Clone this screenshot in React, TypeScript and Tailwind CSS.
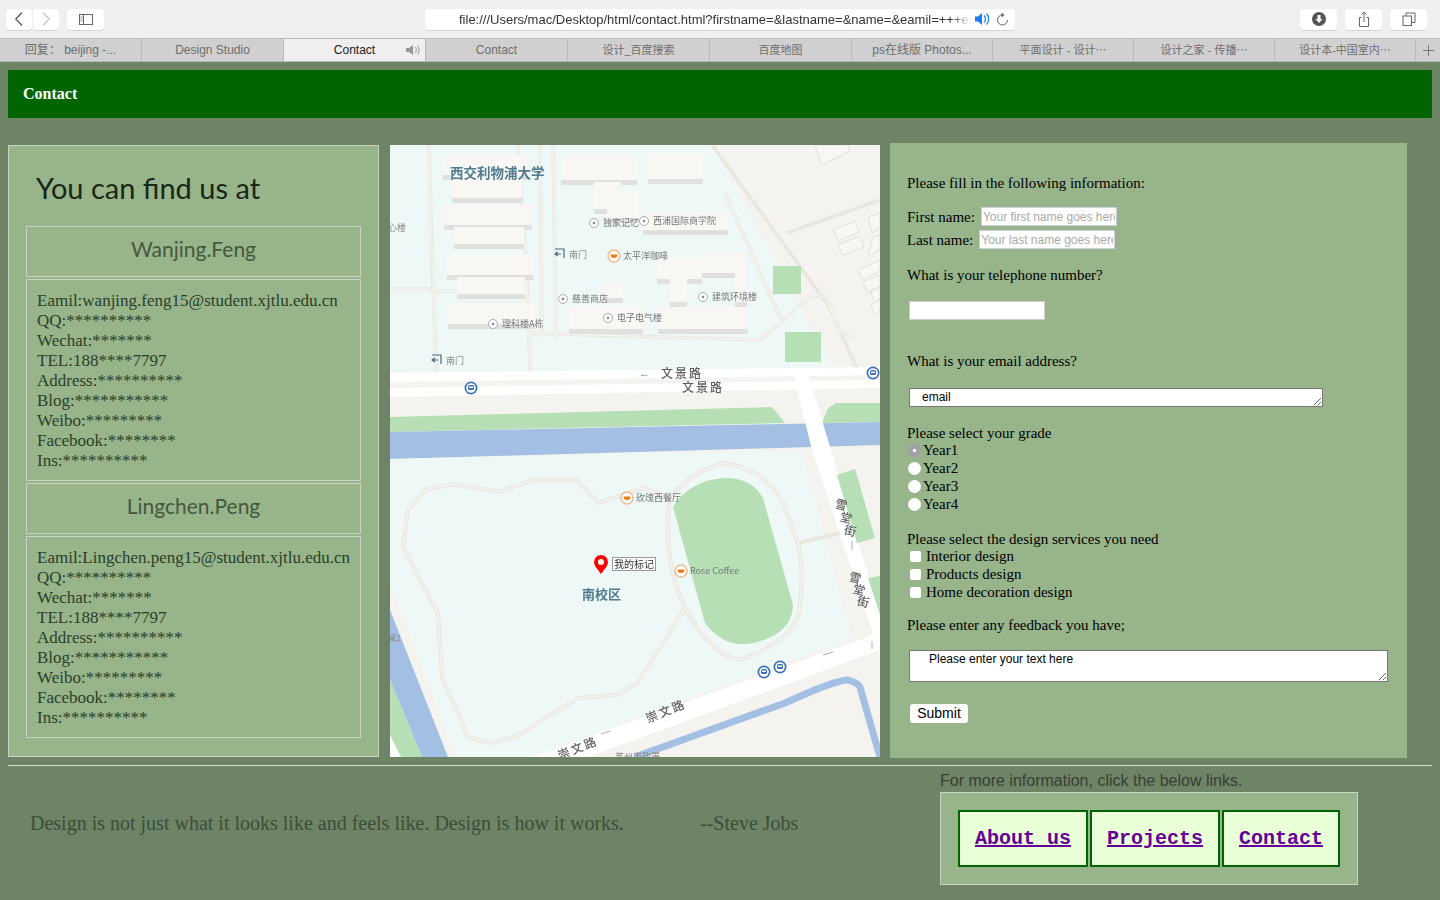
import React from 'react';

const serif = "font-['Liberation_Serif','Noto_Sans_CJK_SC',serif]";
const cjk = 'Noto Sans CJK SC, sans-serif';

const tabs = ['回复： beijing -...', 'Design Studio', 'Contact', 'Contact', '设计_百度搜索', '百度地图', 'ps在线版 Photos...', '平面设计 - 设计⋯', '设计之家 - 传播⋯', '设计本-中国室内⋯'];

const people = [
  { name: 'Wanjing.Feng', email: 'wanjing.feng15@student.xjtlu.edu.cn' },
  { name: 'Lingchen.Peng', email: 'Lingchen.peng15@student.xjtlu.edu.cn' },
];

const details = ['QQ:**********', 'Wechat:*******', 'TEL:188****7797', 'Address:**********', 'Blog:***********', 'Weibo:*********', 'Facebook:********', 'Ins:**********'];

const buildings = [
  [53, 10, 85, 25], [62, 30, 70, 28], [54, 60, 88, 25], [64, 82, 70, 22], [57, 110, 86, 25], [67, 132, 68, 22], [58, 158, 87, 26],
  [171, 10, 76, 30], [258, 8, 55, 31], [204, 37, 27, 32], [217, 46, 32, 32], [253, 67, 85, 23], [267, 112, 45, 27], [312, 108, 45, 25],
  [280, 134, 17, 28], [345, 128, 12, 34], [268, 162, 90, 27], [179, 161, 74, 28], [213, 138, 20, 20],
];

const ChromeButton = ({ className, children }: { className: string; children: React.ReactNode }) => (
  <div className={`h-[21px] rounded-[4px] bg-white shadow-[0_1px_0_#d4d4d4] flex items-center justify-center ${className}`}>{children}</div>
);

const Toolbar = () => (
  <div className="h-[39px] bg-[#efefef] border-b border-[#bdbdbd] flex items-center relative">
    <ChromeButton className="w-[26px] ml-[6px]">
      <svg width="10" height="16" viewBox="0 0 10 16" fill="none" stroke="#555" strokeWidth="1.2"><path d="M8 1.5 1.8 8 8 14.5" /></svg>
    </ChromeButton>
    <ChromeButton className="w-[26px] ml-[1px]">
      <svg width="10" height="16" viewBox="0 0 10 16" fill="none" stroke="#c4c4c4" strokeWidth="1.2"><path d="M2 1.5 8.2 8 2 14.5" /></svg>
    </ChromeButton>
    <ChromeButton className="w-[37px] ml-[8px]">
      <svg width="16" height="13" viewBox="0 0 16 13" fill="none" stroke="#666"><rect x="1.5" y="1.5" width="13" height="10" /><path d="M5.5 1.5v10" /><path d="M2.5 4h2M2.5 6h2M2.5 8h2" strokeWidth=".7" /></svg>
    </ChromeButton>
    <div className="w-[590px] h-[21px] ml-[321px] rounded-[4px] bg-white shadow-[0_1px_0_#d4d4d4] flex items-center font-['Liberation_Sans',sans-serif] text-[13px] text-[#333] relative overflow-hidden">
      <span className="ml-[34px] pt-[1px] w-[512px] shrink-0 whitespace-nowrap overflow-hidden [mask-image:linear-gradient(to_right,black_96%,transparent)]">file:///Users/mac/Desktop/html/contact.html?firstname=&amp;lastname=&amp;name=&amp;eamil=+++email</span>
      <svg className="ml-[3px] shrink-0" width="17" height="14" viewBox="0 0 17 14" fill="#1a7cf0"><path d="M1 4.500h3L8 1v12L4 9.500H1z" /><path d="M10 3.500a5 5 0 0 1 0 7M12.500 1.500a8 8 0 0 1 0 11" fill="none" stroke="#1a7cf0" strokeWidth="1.2" /></svg>
      <svg className="ml-[5px] shrink-0" width="13" height="15" viewBox="0 0 13 15" fill="none" stroke="#666"><path d="M6.500 3a5 5 0 1 0 5 5" /><path d="M5.500.5 8.500 3l-3 2.500" fill="#666" stroke="none" /></svg>
    </div>
    <ChromeButton className="w-[37px] ml-[285px]">
      <svg width="14" height="14" viewBox="0 0 14 14"><circle cx="7" cy="7" r="7" fill="#555" /><path d="M5.500 3h3v4h2L7 11 3.500 7h2z" fill="#fff" /></svg>
    </ChromeButton>
    <ChromeButton className="w-[37px] ml-[8px]">
      <svg width="12" height="17" viewBox="0 0 12 17" fill="none" stroke="#666"><path d="M3.500 6.500h-2v9h9v-9h-2M6 11V1M3.500 3.500 6 1l2.500 2.500" /></svg>
    </ChromeButton>
    <ChromeButton className="w-[37px] ml-[8px]">
      <svg width="14" height="14" viewBox="0 0 14 14" fill="none" stroke="#666"><rect x="1" y="4" width="8.500" height="9.500" /><path d="M4 4V1h9v9.500H9.500" /></svg>
    </ChromeButton>
  </div>
);

const TabBar = () => (
  <div className="h-[23px] bg-[#d0d0d0] border-b border-[#b5b5b5] flex font-['Liberation_Sans','Noto_Sans_CJK_SC',sans-serif] text-[#6e6e6e]">
    {tabs.map((tab, i) => (
      <div
        key={i}
        className={`${i < 6 ? 'w-[142px]' : 'w-[141px]'} ${[4, 5, 7, 8, 9].includes(i) ? 'text-[11px]' : 'text-[12px]'} ${i === 2 ? 'bg-[#efefef] text-[#222] relative' : ''} border-r border-[#b8b8b8] flex items-center justify-center whitespace-nowrap`}
      >
        {tab}
        {i === 2 && (
          <svg className="absolute right-[3px] top-[5px]" width="17" height="12" viewBox="0 0 17 12" fill="#999"><path d="M1 4h3l4-3v10L4 8H1z" /><path d="M10 3a4 4 0 0 1 0 6M12.500 1.500a7 7 0 0 1 0 9" fill="none" stroke="#999" /></svg>
        )}
      </div>
    ))}
    <div className="flex-1 flex items-center justify-center">
      <svg width="11" height="11" viewBox="0 0 11 11" stroke="#777"><path d="M5.500 0v11M0 5.500h11" /></svg>
    </div>
  </div>
);

const PersonCard = ({ name, email }: { name: string; email: string }) => (
  <div className="flex flex-col gap-[2px]">
    <div className="h-[51px] border border-[#c9d3c4] pb-[6px] flex items-center justify-center font-['Lato',sans-serif] text-[21px] text-[#46573f]">{name}</div>
    <div className={`h-[202px] border border-[#c9d3c4] pt-[11px] pl-[10px] text-[17px] leading-[20px] text-[#2b3f29] ${serif}`}>
      <div>Eamil:{email}</div>
      {details.map((line) => <div key={line}>{line}</div>)}
    </div>
  </div>
);

const ContactPanel = () => (
  <div className="w-[371px] h-[612px] mt-[2px] border border-[#c9d3c4] bg-[#97b48b] pl-[17px] pr-[17px] shrink-0">
    <h1 className="h-[80px] pl-[10px] pt-[22px] font-['Lato',sans-serif] text-[29px] leading-[40px] font-normal text-[#1a2718]">You can find us at</h1>
    <div className="flex flex-col gap-[2px]">
      {people.map((p) => <PersonCard key={p.name} {...p} />)}
    </div>
  </div>
);

const Bus = ({ x, y }: { x: number; y: number }) => (
  <g transform={`translate(${x} ${y})`}>
    <circle r="6.500" fill="#3c70b8" />
    <circle r="4.800" fill="#fff" />
    <rect x="-3" y="-3" width="6" height="5" rx="1.500" fill="#3c70b8" />
    <rect x="-2" y="-1.500" width="4" height="1.500" fill="#fff" />
  </g>
);

const Poi = ({ x, y, label, size = 9 }: { x: number; y: number; label: string; size?: number }) => (
  <g>
    <circle cx={x} cy={y} r="4.500" fill="#fff" stroke="#aaa" />
    <circle cx={x} cy={y} r="1.300" fill="#888" />
    <text x={x + 9} y={y + 3} fontSize={size} fill="#777" fontFamily={cjk}>{label}</text>
  </g>
);

const Cafe = ({ x, y, label }: { x: number; y: number; label: string }) => (
  <g>
    <circle cx={x} cy={y} r="6" fill="#fff" stroke="#eebb90" strokeWidth="1.500" />
    <path d={`M${x - 3.500} ${y - 1.500}h7a3.500 3.500 0 0 1-7 0z`} fill="#ee7a10" />
    <text x={x + 9} y={y + 3} fontSize="9" fill="#777" fontFamily={cjk}>{label}</text>
  </g>
);

const Gate = ({ x, y }: { x: number; y: number }) => (
  <g>
    <path d={`M${x} ${y}h9v9M${x} ${y + 5}h6M${x + 3} ${y + 3}l-3 2 3 2`} fill="none" stroke="#4a6480" strokeWidth="1.200" />
    <text x={x + 14} y={y + 9} fontSize="9" fill="#8a8a8a" fontFamily={cjk}>南门</text>
  </g>
);

const Road = ({ x, y, label, rotate = 0, size = 12 }: { x: number; y: number; label: string; rotate?: number; size?: number }) => (
  <text transform={`translate(${x} ${y}) rotate(${rotate})`} fontSize={size} fontWeight="500" fill="#5f5f5f" letterSpacing="2" fontFamily={cjk}>{label}</text>
);

const StreetChar = ({ x, y, ch }: { x: number; y: number; ch: string }) => (
  <text transform={`translate(${x} ${y}) rotate(15)`} fontSize="12" fontWeight="500" textAnchor="middle" fill="#5f5f5f" fontFamily={cjk}>{ch}</text>
);

const RING = 'M278 365Q282 335 333 318Q370 322 392 355L408 398Q415 430 408 472Q395 500 350 515Q320 510 295 463Q275 420 278 365z';
const LOOP = 'M63 339 110 347 142 335 187 335 208 358 253 343 278 352M63 339 35 345 18 365 13 402 48 468 52 532 78 592 100 598 125 592 188 553 227 550 248 537 295 463';
const NORTH = 'M39 0 43 145 47 228M0 144H42M43 146H90M128 0 137 130 140 228M150 0 152 192M163 0 166 194M137 188 370 195 392 177 422 150 437 152 448 185 464 195M335 48 392 177';

const MapPanel = () => (
  <div className="w-[490px] h-[612px] mt-[2px] ml-[11px] shrink-0 overflow-hidden bg-[#f4f3ef]">
    <svg width="490" height="612" viewBox="0 0 490 612" className="block blur-[0.4px]">
      <rect width="490" height="612" fill="#f4f3ef" />
      <path d="M0 0H322L438 212 440 226 0 232z" fill="#eef8f6" />
      <g fill="none" stroke="#e9e7e0" strokeWidth="3.500">
        <path d={NORTH} />
        <path d="M322 0 438 160 470 230M397 88 490 55" />
      </g>
      <path d={NORTH} fill="none" stroke="#f5f4ef" strokeWidth="1.500" />
      {buildings.map(([x, y, w, h], i) => (
        <g key={i}>
          <rect x={x} y={y} width={w} height={h} fill="#e0e0de" />
          <rect x={x} y={y} width={w} height={h - 5} fill="#f8f7f4" />
        </g>
      ))}
      <rect x="383" y="121" width="28" height="28" fill="#b6dfb6" />
      <rect x="395" y="187" width="36" height="30" fill="#b6dfb6" />
      <g fill="#f8f7f4" stroke="#e2e0da">
        <path d="M425 0 458 0 460 6 432 20z" />
        <path d="M443 85 465 76 469 87 448 96zM448 100 470 91 474 102 453 110zM478 72 490 68V82L482 88zM483 92 490 90V104L478 112zM468 125 490 115V125L473 135zM473 137 490 130V142L478 148zM480 145 490 142V152L485 158zM480 160 490 155V165L485 170z" />
      </g>
      <path d="M0 228 490 222V230L0 237z" fill="#fff" />
      <path d="M0 243 490 235V243L0 252z" fill="#fff" />
      <path d="M0 272 382 262 395 278 0 287z" fill="#b6dfb6" />
      <path d="M432 278 438 263 446 258H490V277z" fill="#b6dfb6" />
      <path d="M0 287 490 277V300L0 314z" fill="#a3bfe3" />
      <path d="M0 314 412 305 462 493 142 612H65L0 438z" fill="#eef8f6" />
      <path d="M0 465 58 612H32L0 535z" fill="#a3bfe3" />
      <path d="M0 535 32 612H0z" fill="#b6dfb6" />
      <path d="M0 590 11 612H0z" fill="#fff" />
      <path d="M403 228H418L490 470V510L422 305z" fill="#fff" />
      <path d="M447 330 465 324 485 393 467 398z" fill="#b6dfb6" />
      <path d="M478 433 490 431V470z" fill="#b6dfb6" />
      <path d="M475 493 490 487V505L198 612H142z" fill="#fff" />
      <path d="M245 612 395 558Q445 535 458 535Q468 538 470 542L490 612" fill="none" stroke="#a3bfe3" strokeWidth="7" />
      <path d="M283 362Q300 335 335 333Q362 333 373 353L403 460Q402 480 385 490Q362 502 342 498Q325 492 315 478z" fill="#b6dfb6" />
      <g fill="none" stroke="#e9e7e0" strokeWidth="4" strokeLinejoin="round">
        <path d={LOOP} />
        <path d={RING} />
        <path d="M408 398 450 388" />
      </g>
      <g fill="none" stroke="#f5f4ef" strokeWidth="1.500" strokeLinejoin="round">
        <path d={LOOP} />
        <path d={RING} />
      </g>
      <g stroke="#999" fill="none" strokeWidth=".8">
        <path d="M443 507 433 510M220 586 211 589M462 396V405M482 496V504" />
      </g>
      <text x="60" y="33" fontSize="13.500" fontWeight="700" fill="#4f7a90" fontFamily={cjk}>西交利物浦大学</text>
      <text x="-2" y="86" fontSize="9" fill="#888" fontFamily={cjk}>心楼</text>
      <text x="-2" y="496" fontSize="8" fill="#888" fontFamily={cjk}>寓2</text>
      <Poi x={204} y={78} label="独家记忆" />
      <Poi x={254} y={76} label="西浦国际商学院" />
      <Gate x={165} y={104} />
      <Cafe x={224} y={111} label="太平洋咖啡" />
      <Poi x={173} y={154} label="慈善商店" />
      <Poi x={313} y={152} label="建筑环境楼" />
      <Poi x={218} y={173} label="电子电气楼" />
      <Poi x={103} y={179} label="理科楼A栋" />
      <Gate x={42} y={210} />
      <text x="249" y="232" fontSize="11" fill="#777">←</text>
      <Road x={271} y={233} label="文景路" />
      <Road x={292} y={247} label="文景路" />
      <Bus x={81} y={243} />
      <Bus x={483} y={228} />
      <Cafe x={237} y={353} label="玫瑰西餐厅" />
      <Cafe x={291} y={426} label="Rose Coffee" />
      <path d="M211 429c-3.500-5-7-8-7-12a7 7 0 0 1 14 0c0 4-3.500 7-7 12z" fill="#f00" />
      <circle cx="211" cy="417" r="3" fill="#fff" />
      <rect x="222.500" y="412.500" width="43" height="13" fill="#fff" stroke="#999" />
      <text x="224" y="423" fontSize="10" fill="#333" fontFamily={cjk}>我的标记</text>
      <text x="192" y="454" fontSize="13" fontWeight="700" fill="#4f7a90" fontFamily={cjk}>南校区</text>
      <StreetChar x={450} y={364} ch="雪" />
      <StreetChar x={455} y={377} ch="堂" />
      <StreetChar x={459} y={390} ch="街" />
      <StreetChar x={464} y={437} ch="雪" />
      <StreetChar x={468} y={449} ch="堂" />
      <StreetChar x={472} y={461} ch="街" />
      <Road x={258} y={578} label="崇文路" rotate={-22} />
      <Road x={170} y={615} label="崇文路" rotate={-22} />
      <Bus x={374} y={527} />
      <Bus x={390} y={522} />
      <text x="225" y="615" fontSize="9" fill="#888" fontFamily={cjk}>苏州市政署</text>
    </svg>
  </div>
);

const Radio = ({ label, checked }: { label: string; checked?: boolean }) => (
  <label className="flex items-center h-[18px]">
    <input
      type="radio"
      name="grade"
      defaultChecked={checked}
      className="appearance-none w-[13px] h-[13px] ml-[1px] mr-[2px] rounded-full bg-white checked:bg-[radial-gradient(circle,#ffffff_1.500px,#a0a0a6_2px)]"
    />
    <span>{label}</span>
  </label>
);

const Check = ({ label }: { label: string }) => (
  <label className="flex items-center h-[18px]">
    <input type="checkbox" className="appearance-none w-[11px] h-[11px] ml-[3px] rounded-[2px] bg-white" />
    <span className="ml-[5px]">{label}</span>
  </label>
);

const FormPanel = () => (
  <form className={`w-[517px] h-[615px] ml-[10px] pl-[17px] bg-[#97b48b] shrink-0 text-[15px] leading-[18px] text-black ${serif}`}>
    <div className="pt-[31px]">Please fill in the following information:</div>
    <div className="mt-[13px] h-[23px] flex items-center">
      First name:
      <input placeholder="Your first name goes here" className="ml-[6px] w-[136px] h-[19px] px-[1px] bg-white border border-[#ccd] font-['Liberation_Sans',sans-serif] text-[12px] placeholder:text-[#a9a9a9]" />
    </div>
    <div className="h-[23px] flex items-center">
      Last name:
      <input placeholder="Your last name goes here" className="ml-[6px] w-[136px] h-[19px] px-[1px] bg-white border border-[#ccd] font-['Liberation_Sans',sans-serif] text-[12px] placeholder:text-[#a9a9a9]" />
    </div>
    <div className="mt-[15px]">What is your telephone number?</div>
    <input className="block mt-[17px] ml-[2px] w-[136px] h-[19px] bg-white border border-[#ccc]" />
    <div className="mt-[32px]">What is your email address?</div>
    <textarea
      defaultValue="email"
      className="block mt-[18px] ml-[2px] w-[414px] h-[19px] pl-[12px] bg-white border border-[#777] font-['Liberation_Sans',sans-serif] text-[12px] leading-[17px] overflow-hidden"
    />
    <div className="mt-[17px] h-[17px]">Please select your grade</div>
    <Radio label="Year1" checked />
    <Radio label="Year2" />
    <Radio label="Year3" />
    <Radio label="Year4" />
    <div className="mt-[17px] h-[17px]">Please select the design services you need</div>
    <Check label="Interior design" />
    <Check label="Products design" />
    <Check label="Home decoration design" />
    <div className="mt-[15px]">Please enter any feedback you have;</div>
    <textarea
      defaultValue="Please enter your text here"
      className="block mt-[16px] ml-[2px] w-[479px] h-[32px] pl-[19px] bg-white border border-[#777] font-['Liberation_Sans',sans-serif] text-[12px] leading-[17px] overflow-hidden"
    />
    <button type="button" className="block mt-[22px] ml-[3px] w-[58px] h-[19px] rounded-[3px] bg-white font-['Liberation_Sans',sans-serif] text-[14px] leading-[19px]">Submit</button>
  </form>
);

const FooterLink = ({ label, width }: { label: string; width: string }) => (
  <a href="#" className={`${width} h-[57px] border-2 border-[#006400] bg-[#e8ffd8] flex items-center justify-center font-['Liberation_Mono',monospace] text-[20px] font-bold text-[#660099] underline`}>{label}</a>
);

const Footer = () => (
  <div className="flex">
    <div className={`w-[940px] pl-[30px] pt-[45px] text-[20px] leading-[24px] text-[#3d4e39] whitespace-nowrap flex ${serif}`}>
      <span className="w-[670px]">Design is not just what it looks like and feels like. Design is how it works.</span>
      <span>--Steve Jobs</span>
    </div>
    <div className="pt-[6px]">
      <div className="font-['Liberation_Sans',sans-serif] text-[16px] leading-[18px] text-[#383f33]">For more information, click the below links.</div>
      <div className="w-[418px] h-[93px] mt-[2px] border border-[#c9d3c4] bg-[#97b48b] pl-[17px] pt-[17px] flex gap-[2px]">
        <FooterLink label="About us" width="w-[130px]" />
        <FooterLink label="Projects" width="w-[130px]" />
        <FooterLink label="Contact" width="w-[118px]" />
      </div>
    </div>
  </div>
);

export default function App() {
  return (
    <div className="w-[1440px] h-[900px] overflow-hidden bg-[#6d8467]">
      <Toolbar />
      <TabBar />
      <div className="mx-2 mt-[8px] h-[48px] bg-[#006400] pl-[15px] flex items-center">
        <span className={`text-[16px] font-bold text-white ${serif}`}>Contact</span>
      </div>
      <div className="flex pl-2 mt-[25px]">
        <ContactPanel />
        <MapPanel />
        <FormPanel />
      </div>
      <div className="mx-2 mt-[7px] border-t border-[#d8ddd4]" />
      <Footer />
    </div>
  );
}
